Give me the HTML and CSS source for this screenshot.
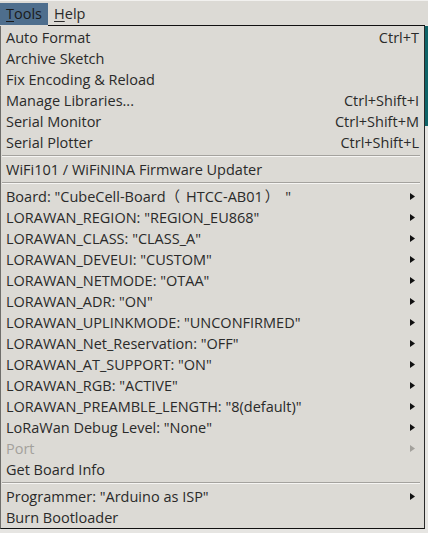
FILE: index.html
```html
<!DOCTYPE html>
<html>
<head>
<meta charset="utf-8">
<link rel="stylesheet" href="styles.css">
</head>
<body>
<div class="menubar">
  <span class="mb-item active"><u>T</u>ools</span>
  <span class="mb-item"><u>H</u>elp</span>
</div>
<div class="topline"></div>
<div class="below">
  <div class="popup">
    <div class="row"><span>Auto Format</span><span class="sc">Ctrl+T</span></div>
    <div class="row"><span>Archive Sketch</span></div>
    <div class="row"><span>Fix Encoding &amp; Reload</span></div>
    <div class="row"><span>Manage Libraries...</span><span class="sc">Ctrl+Shift+I</span></div>
    <div class="row"><span>Serial Monitor</span><span class="sc">Ctrl+Shift+M</span></div>
    <div class="row"><span>Serial Plotter</span><span class="sc">Ctrl+Shift+L</span></div>
    <div class="sep"></div>
    <div class="row"><span>WiFi101 / WiFiNINA Firmware Updater</span></div>
    <div class="sep"></div>
    <div class="row sub"><span>Board: "CubeCell-Board<span class="fw fw-open">（</span>HTCC-AB01<span class="fw fw-close">）</span>"</span><svg class="arr" viewBox="0 0 5 7" width="5" height="7"><polygon points="0,0 5,3.5 0,7"/></svg></div>
    <div class="row sub"><span>LORAWAN_REGION: "REGION_EU868"</span><svg class="arr" viewBox="0 0 5 7" width="5" height="7"><polygon points="0,0 5,3.5 0,7"/></svg></div>
    <div class="row sub"><span>LORAWAN_CLASS: "CLASS_A"</span><svg class="arr" viewBox="0 0 5 7" width="5" height="7"><polygon points="0,0 5,3.5 0,7"/></svg></div>
    <div class="row sub"><span>LORAWAN_DEVEUI: "CUSTOM"</span><svg class="arr" viewBox="0 0 5 7" width="5" height="7"><polygon points="0,0 5,3.5 0,7"/></svg></div>
    <div class="row sub"><span>LORAWAN_NETMODE: "OTAA"</span><svg class="arr" viewBox="0 0 5 7" width="5" height="7"><polygon points="0,0 5,3.5 0,7"/></svg></div>
    <div class="row sub"><span>LORAWAN_ADR: "ON"</span><svg class="arr" viewBox="0 0 5 7" width="5" height="7"><polygon points="0,0 5,3.5 0,7"/></svg></div>
    <div class="row sub"><span>LORAWAN_UPLINKMODE: "UNCONFIRMED"</span><svg class="arr" viewBox="0 0 5 7" width="5" height="7"><polygon points="0,0 5,3.5 0,7"/></svg></div>
    <div class="row sub"><span>LORAWAN_Net_Reservation: "OFF"</span><svg class="arr" viewBox="0 0 5 7" width="5" height="7"><polygon points="0,0 5,3.5 0,7"/></svg></div>
    <div class="row sub"><span>LORAWAN_AT_SUPPORT: "ON"</span><svg class="arr" viewBox="0 0 5 7" width="5" height="7"><polygon points="0,0 5,3.5 0,7"/></svg></div>
    <div class="row sub"><span>LORAWAN_RGB: "ACTIVE"</span><svg class="arr" viewBox="0 0 5 7" width="5" height="7"><polygon points="0,0 5,3.5 0,7"/></svg></div>
    <div class="row sub"><span>LORAWAN_PREAMBLE_LENGTH: "8(default)"</span><svg class="arr" viewBox="0 0 5 7" width="5" height="7"><polygon points="0,0 5,3.5 0,7"/></svg></div>
    <div class="row sub"><span>LoRaWan Debug Level: "None"</span><svg class="arr" viewBox="0 0 5 7" width="5" height="7"><polygon points="0,0 5,3.5 0,7"/></svg></div>
    <div class="row sub disabled"><span>Port</span><svg class="arr" viewBox="0 0 5 7" width="5" height="7"><polygon points="0,0 5,3.5 0,7"/></svg></div>
    <div class="row"><span>Get Board Info</span></div>
    <div class="sep"></div>
    <div class="row sub"><span>Programmer: "Arduino as ISP"</span><svg class="arr" viewBox="0 0 5 7" width="5" height="7"><polygon points="0,0 5,3.5 0,7"/></svg></div>
    <div class="row"><span>Burn Bootloader</span></div>
  </div>
  <div class="edge"></div>
</div>
</body>
</html>
```
FILE: styles.css
```css
html, body {
  margin: 0;
  padding: 0;
}
body {
  width: 428px;
  height: 533px;
  overflow: hidden;
  background: #e6e5e2;
  font-family: "Open Sans", "Noto Sans", "Noto Sans CJK SC", sans-serif;
  font-size: 14.5px;
  color: #2a2a2a;
}
.menubar {
  padding-top: 2px;
  background: #dcdad5;
  border-top: 1px solid #f2f1ef;
  box-sizing: content-box;
  display: flex;
  height: 22px;
}
.mb-item {
  display: flex;
  align-items: center;
  padding: 0 6px 0 6px;
  line-height: 22px;
}
.mb-item u {
  text-decoration: underline;
  text-underline-offset: 2px;
}
.mb-item.active {
  background: #4e6e8d;
  color: #1a1a1a;
}
.topline {
  height: 1px;
  width: 425px;
  background: linear-gradient(to right, #dcdad5 48px, #111 48px);
}
.below {
  display: flex;
  align-items: flex-start;
}
.popup {
  width: 423px;
  background: #dcdad5;
  border-left: 1px solid #6f6e6b;
  border-right: 1px solid #2a2a2a;
  border-bottom: 1px solid #111;
  padding-top: 1px;
}
.row {
  height: 21px;
  line-height: 21px;
  display: flex;
  align-items: center;
  padding: 0 5px 0 5px;
  white-space: nowrap;
}
.fw {
  font-family: "Noto Sans CJK SC", sans-serif;
  font-size: 14.5px;
  line-height: 1;
}
.fw-open {
  margin: 0 6px 0 0;
}
.fw-close {
  margin: 0 6px 0 2px;
}
.sc {
  margin-left: auto;
}
.arr {
  margin-left: auto;
  margin-right: 4px;
  fill: #111;
}
.disabled {
  color: #a3a19c;
}
.disabled .arr {
  fill: #a3a19c;
}
.sep {
  margin: 2px 4px 2px 1px;
  border-top: 1px solid #a4a29e;
  border-bottom: 1px solid #f6f5f3;
  height: 0;
}
.edge {
  width: 3px;
  height: 100px;
  background: #0f6367;
}
```
